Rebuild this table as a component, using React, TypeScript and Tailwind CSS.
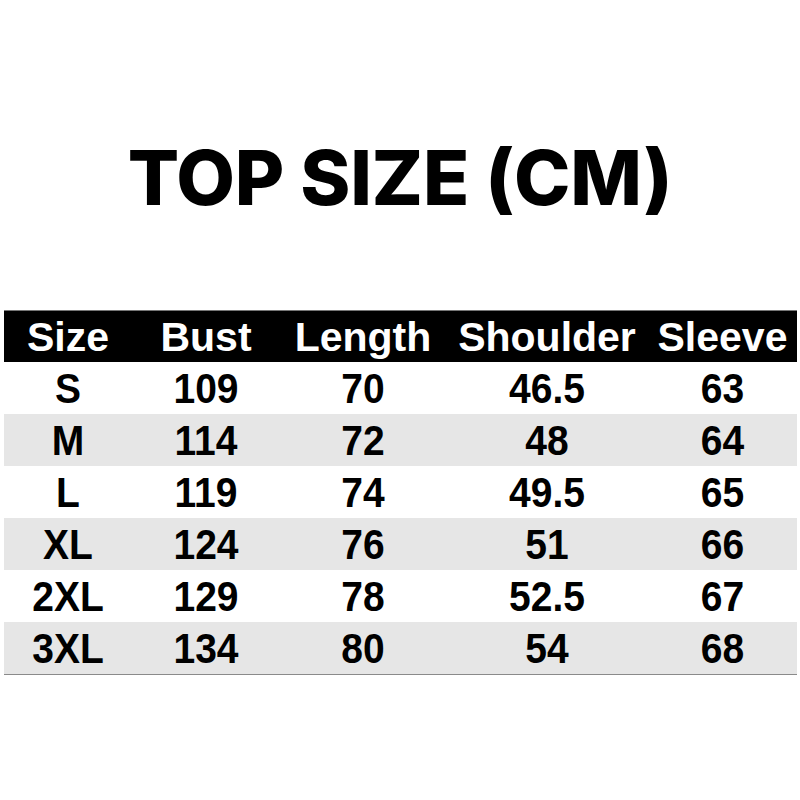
const rows = [
  ['S', '109', '70', '46.5', '63'],
  ['M', '114', '72', '48', '64'],
  ['L', '119', '74', '49.5', '65'],
  ['XL', '124', '76', '51', '66'],
  ['2XL', '129', '78', '52.5', '67'],
  ['3XL', '134', '80', '54', '68'],
]

const heads = ['Size', 'Bust', 'Length', 'Shoulder', 'Sleeve']

const cols = 'grid grid-cols-[128px_148px_166px_202px_149px]'

export default function App() {
  return (
    <div className="w-[800px] h-[800px] bg-white overflow-hidden">
      {/* Title */}
      <div className="pt-[132px] h-[310px]">
        <h1 className="text-center text-black text-[76px] leading-[90px] font-extrabold tracking-[-0.3px] font-['Inter',sans-serif]">
          TOP SIZE (CM)
        </h1>
      </div>

      {/* Table */}
      <div className="ml-[4px] w-[793px] font-['Liberation_Sans',Arial,sans-serif] font-bold">
        <div className={`${cols} h-[52px] bg-black text-white border-t border-[#777]`}>
          {heads.map(h => (
            <div key={h} className="flex items-center justify-center text-[41px] leading-none pt-[2px]">{h}</div>
          ))}
        </div>
        {rows.map((r, i) => (
          <div key={r[0]} className={`${cols} h-[52px] text-black ${i % 2 ? 'bg-[#e6e6e6]' : 'bg-white'}`}>
            {r.map((c, j) => (
              <div key={j} className="flex items-center justify-center text-[39px] leading-none scale-y-110">{c}</div>
            ))}
          </div>
        ))}
        <div className="h-px bg-[#8a8a8a]" />
      </div>
    </div>
  )
}
